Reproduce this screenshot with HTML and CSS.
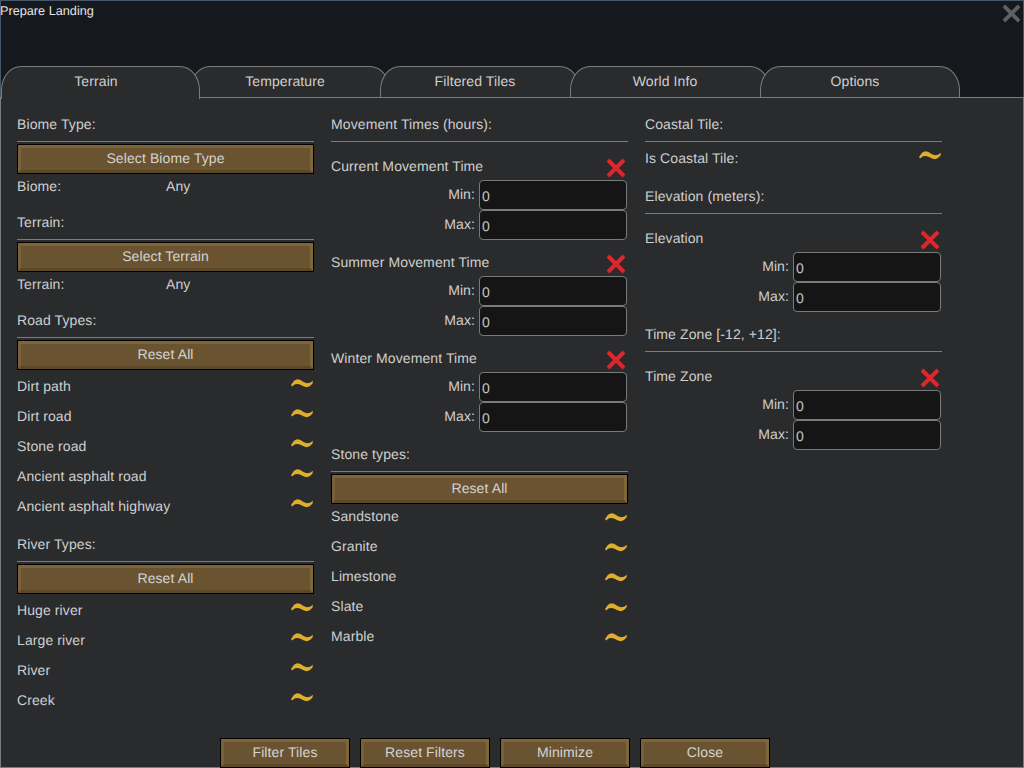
FILE: index.html
```html
<!DOCTYPE html>
<html lang="en">
<head>
    <meta charset="UTF-8">
    <title>Prepare Landing</title>
    <link rel="stylesheet" href="styles.css">
</head>
<body>
    <svg class="sprites" width="0" height="0">
        <symbol id="wave" viewBox="0 0 22 9">
            <path d="M0 6 L3 1.8 L6 0.3 L9 0.8 L13 3.2 L16 4.2 L19 3.7 L22 1.8 L21.5 4.6 L19 7 L16 8.2 L13 7.6 L10 6 L7 5 L4 5.2 L1 7.6 Z"/>
        </symbol>
        <symbol id="cross" viewBox="0 0 20 20">
            <path d="M2 2 L18 18 M18 2 L2 18"/>
        </symbol>
    </svg>

    <div class="window">
        <div class="header">
            <div class="title">Prepare Landing</div>
            <svg class="close-icon"><use href="#cross"/></svg>
            <div class="tabs">
                <div class="tab tab-active">Terrain</div>
                <div class="tab">Temperature</div>
                <div class="tab">Filtered Tiles</div>
                <div class="tab">World Info</div>
                <div class="tab">Options</div>
            </div>
        </div>

        <div class="panel">
            <div class="columns">
                <div class="column">
                    <div class="section">
                        <div class="section-head">Biome Type:</div>
                        <button class="btn"><span class="btn-face">Select Biome Type</span></button>
                        <div class="info-row"><span>Biome:</span><span>Any</span></div>
                    </div>
                    <div class="section">
                        <div class="section-head">Terrain:</div>
                        <button class="btn"><span class="btn-face">Select Terrain</span></button>
                        <div class="info-row"><span>Terrain:</span><span>Any</span></div>
                    </div>
                    <div class="section">
                        <div class="section-head">Road Types:</div>
                        <button class="btn"><span class="btn-face">Reset All</span></button>
                        <div class="toggle-list toggle-list-roomy">
                            <div class="toggle-row">Dirt path<svg class="wave"><use href="#wave"/></svg></div>
                            <div class="toggle-row">Dirt road<svg class="wave"><use href="#wave"/></svg></div>
                            <div class="toggle-row">Stone road<svg class="wave"><use href="#wave"/></svg></div>
                            <div class="toggle-row">Ancient asphalt road<svg class="wave"><use href="#wave"/></svg></div>
                            <div class="toggle-row">Ancient asphalt highway<svg class="wave"><use href="#wave"/></svg></div>
                        </div>
                    </div>
                    <div class="section">
                        <div class="section-head">River Types:</div>
                        <button class="btn"><span class="btn-face">Reset All</span></button>
                        <div class="toggle-list toggle-list-roomy">
                            <div class="toggle-row">Huge river<svg class="wave"><use href="#wave"/></svg></div>
                            <div class="toggle-row">Large river<svg class="wave"><use href="#wave"/></svg></div>
                            <div class="toggle-row">River<svg class="wave"><use href="#wave"/></svg></div>
                            <div class="toggle-row">Creek<svg class="wave"><use href="#wave"/></svg></div>
                        </div>
                    </div>
                </div>

                <div class="column">
                    <div class="section section-filters">
                        <div class="section-head">Movement Times (hours):</div>
                        <div class="filter-group">
                            <div class="filter-title">Current Movement Time<svg class="cross"><use href="#cross"/></svg></div>
                            <label class="range-row"><span class="range-label">Min:</span><input type="text" value="0"></label>
                            <label class="range-row"><span class="range-label">Max:</span><input type="text" value="0"></label>
                        </div>
                        <div class="filter-group">
                            <div class="filter-title">Summer Movement Time<svg class="cross"><use href="#cross"/></svg></div>
                            <label class="range-row"><span class="range-label">Min:</span><input type="text" value="0"></label>
                            <label class="range-row"><span class="range-label">Max:</span><input type="text" value="0"></label>
                        </div>
                        <div class="filter-group">
                            <div class="filter-title">Winter Movement Time<svg class="cross"><use href="#cross"/></svg></div>
                            <label class="range-row"><span class="range-label">Min:</span><input type="text" value="0"></label>
                            <label class="range-row"><span class="range-label">Max:</span><input type="text" value="0"></label>
                        </div>
                    </div>
                    <div class="section">
                        <div class="section-head">Stone types:</div>
                        <button class="btn"><span class="btn-face">Reset All</span></button>
                        <div class="toggle-list">
                            <div class="toggle-row">Sandstone<svg class="wave"><use href="#wave"/></svg></div>
                            <div class="toggle-row">Granite<svg class="wave"><use href="#wave"/></svg></div>
                            <div class="toggle-row">Limestone<svg class="wave"><use href="#wave"/></svg></div>
                            <div class="toggle-row">Slate<svg class="wave"><use href="#wave"/></svg></div>
                            <div class="toggle-row">Marble<svg class="wave"><use href="#wave"/></svg></div>
                        </div>
                    </div>
                </div>

                <div class="column">
                    <div class="section">
                        <div class="section-head">Coastal Tile:</div>
                        <div class="toggle-row toggle-row-single">Is Coastal Tile:<svg class="wave"><use href="#wave"/></svg></div>
                    </div>
                    <div class="section section-filters">
                        <div class="section-head">Elevation (meters):</div>
                        <div class="filter-group">
                            <div class="filter-title">Elevation<svg class="cross"><use href="#cross"/></svg></div>
                            <label class="range-row"><span class="range-label">Min:</span><input type="text" value="0"></label>
                            <label class="range-row"><span class="range-label">Max:</span><input type="text" value="0"></label>
                        </div>
                    </div>
                    <div class="section">
                        <div class="section-head">Time Zone [-12, +12]:</div>
                        <div class="filter-group">
                            <div class="filter-title">Time Zone<svg class="cross"><use href="#cross"/></svg></div>
                            <label class="range-row"><span class="range-label">Min:</span><input type="text" value="0"></label>
                            <label class="range-row"><span class="range-label">Max:</span><input type="text" value="0"></label>
                        </div>
                    </div>
                </div>
            </div>

            <div class="footer">
                <button class="btn"><span class="btn-face">Filter Tiles</span></button>
                <button class="btn"><span class="btn-face">Reset Filters</span></button>
                <button class="btn"><span class="btn-face">Minimize</span></button>
                <button class="btn"><span class="btn-face">Close</span></button>
            </div>
        </div>
    </div>
</body>
</html>
```

FILE: styles.css
```css
* {
    box-sizing: border-box;
}

body {
    margin: 0;
    font-family: "Liberation Sans", Arial, sans-serif;
    font-size: 14px;
    letter-spacing: 0.1px;
    text-rendering: geometricPrecision;
    color: #cfcfcf;
    background-color: #15191e;
}

.sprites {
    display: block;
}

.window {
    display: flex;
    flex-direction: column;
    width: 1024px;
    height: 768px;
    overflow: hidden;
}

/* Title bar and tab strip */
.header {
    position: relative;
    flex: none;
    height: 97px;
    border: 1px solid #48566a;
    border-bottom: none;
    background-color: #15191e;
}

.title {
    height: 65px;
    margin-left: -1px;
    font-size: 12.7px;
    letter-spacing: 0;
    line-height: 20px;
    color: #e4e4e4;
}

.close-icon {
    position: absolute;
    top: 3px;
    right: 2px;
    width: 19px;
    height: 19px;
    fill: none;
    stroke: #5e6064;
    stroke-width: 4;
}

.tabs {
    display: flex;
    height: 32px;
}

.tab {
    flex: none;
    width: 200px;
    height: 32px;
    margin-left: -10px;
    padding-right: 10px;
    border: 1px solid #7c7c7c;
    border-radius: 20px 20px 0 0 / 24px 24px 0 0;
    background-color: #2a2b2d;
    text-align: center;
    line-height: 28px;
}

.tab-active {
    position: relative;
    z-index: 1;
    width: 199px;
    margin-left: 0;
    padding-right: 9px;
    border-bottom: none;
    height: 33px;
}

/* Main panel */
.panel {
    display: flex;
    flex: 1;
    flex-direction: column;
    justify-content: space-between;
    padding: 12px 16px 0;
    border: 1px solid #7c7c7c;
    background-color: #2a2b2d;
}

.columns {
    display: grid;
    grid-template-columns: repeat(3, 297px);
    column-gap: 17px;
}

.section {
    margin-bottom: 10px;
}

.section-filters {
    margin-bottom: 8px;
}

.section-head {
    height: 32px;
    margin-bottom: 2px;
    border-bottom: 1px solid #7c7c7c;
    line-height: 28px;
}

.btn {
    display: block;
    width: 100%;
    height: 30px;
    padding: 0;
    border: 1px solid #000;
    background: none;
    font: inherit;
    letter-spacing: inherit;
    text-rendering: inherit;
    color: #d4d4d4;
}

.btn-face {
    display: block;
    height: 100%;
    border: 3px solid;
    border-color: #7d6538 #806739 #5c4829 #78603a;
    background-color: #6a5331;
    line-height: 21px;
}

.info-row {
    display: grid;
    grid-template-columns: 149px 1fr;
    height: 24px;
    line-height: 24px;
}

.toggle-list {
    margin-top: -3px;
}

.toggle-list-roomy {
    margin: 1px 0 -1px;
}

.toggle-row {
    display: flex;
    align-items: center;
    justify-content: space-between;
    height: 30px;
}

.toggle-row-single {
    height: 28px;
}

.wave {
    width: 22px;
    height: 9px;
    margin: -6px 1px 0 0;
    fill: #e0ae2b;
}

.toggle-list .wave {
    margin-top: 2px;
}

.toggle-list-roomy .wave {
    margin-top: -6px;
}

.filter-group {
    padding-top: 10px;
}

.filter-title {
    display: flex;
    align-items: center;
    justify-content: space-between;
    height: 24px;
    margin-bottom: 2px;
}

.cross {
    width: 20px;
    height: 20px;
    margin: 4px 2px 0 0;
    fill: none;
    stroke: #e0262a;
    stroke-width: 4;
}

.range-row {
    display: flex;
    align-items: center;
    justify-content: flex-end;
    gap: 4px;
    height: 30px;
}

.range-label {
    margin-bottom: 2px;
}

.range-row input {
    width: 148px;
    height: 30px;
    margin-right: 1px;
    padding: 3px 2px 2px;
    border: 1px solid #7a7a7a;
    border-radius: 4px;
    outline: none;
    background-color: #151515;
    font: inherit;
    letter-spacing: inherit;
    text-rendering: inherit;
    color: #c4c4c4;
}

.footer {
    display: flex;
    gap: 10px;
    margin: 0 0 -1px 203px;
}

.footer .btn {
    width: 130px;
}
```
